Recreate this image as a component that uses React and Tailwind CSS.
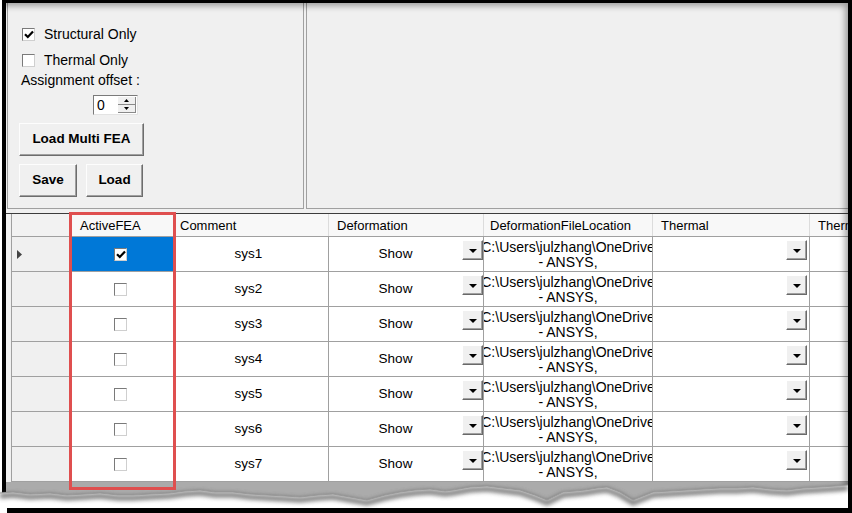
import React from 'react';

const COLS = 'grid grid-cols-[59px_105px_154px_155px_169px_157px_38px]';
const BTN =
  'bg-[#f0f0f0] border border-t-[#fdfdfd] border-l-[#fdfdfd] border-r-[#6d6d6d] border-b-[#6d6d6d] shadow-[inset_-1px_-1px_0_#a0a0a0] font-bold text-[13.5px] flex items-center justify-center';

const ROWS = ['sys1', 'sys2', 'sys3', 'sys4', 'sys5', 'sys6', 'sys7'];

// torn paper edge, y relative to the svg top (480)
const JAG = [
  [0, 13], [13, 12], [30, 14], [50, 13], [67, 15], [85, 14], [100, 13], [118, 15], [133, 15],
  [150, 14], [170, 13], [185, 11], [200, 10], [215, 12], [233, 12], [250, 14], [267, 15],
  [285, 16], [300, 17], [318, 15], [333, 14], [350, 17], [367, 20], [385, 15], [400, 12],
  [415, 10], [430, 9], [445, 11], [453, 10], [470, 7], [487, 6], [503, 8], [520, 10],
  [535, 15], [547, 20], [555, 16], [563, 12], [575, 11], [585, 10], [597, 8], [607, 7],
  [620, 12], [633, 20], [643, 16], [653, 12], [670, 11], [687, 10], [703, 9], [720, 8],
  [737, 8], [753, 7], [770, 9], [787, 10], [803, 8], [820, 7], [835, 6], [848, 5],
];

function CheckBox({ checked, className = '' }) {
  return (
    <div
      className={`w-[13px] h-[13px] shrink-0 bg-white border border-t-[#7a7a7a] border-l-[#7a7a7a] border-r-[#cfcfcf] border-b-[#cfcfcf] flex items-center justify-center ${className}`}
    >
      {checked && (
        <svg width="10" height="9" viewBox="0 0 10 9">
          <path d="M1 4.2l2.8 2.8L9 1.4" fill="none" stroke="black" strokeWidth="2.2" />
        </svg>
      )}
    </div>
  );
}

function DropButton({ className = '' }) {
  return (
    <div
      className={`w-[21px] h-[20px] shrink-0 bg-[#f0f0f0] border border-t-white border-l-white border-r-[#696969] border-b-[#696969] shadow-[inset_-1px_-1px_0_#a0a0a0] flex items-center justify-center ${className}`}
    >
      <svg width="8" height="4" viewBox="0 0 8 4" className="mt-[2px]">
        <path d="M0 0h8L4 4z" fill="black" />
      </svg>
    </div>
  );
}

function Spin() {
  return (
    <div className="w-[18px] my-[1px] mr-[1px] flex flex-col">
      <div className="flex-1 bg-[#f0f0f0] border-r border-b border-[#8a8a8a] flex items-center justify-center">
        <svg width="5" height="3" viewBox="0 0 5 3">
          <path d="M0 3h5L2.5 0z" fill="black" />
        </svg>
      </div>
      <div className="flex-1 bg-[#f0f0f0] border-r border-b border-[#8a8a8a] flex items-center justify-center">
        <svg width="5" height="3" viewBox="0 0 5 3">
          <path d="M0 0h5L2.5 3z" fill="black" />
        </svg>
      </div>
    </div>
  );
}

function TopPanels() {
  return (
    <div className="flex h-[206px]">
      <div className="ml-[1px] w-[297px] border-l border-r border-b border-[#a0a0a0] pl-[11px] pt-[21px] text-[14px] text-black">
        <div className="flex items-center h-5 pl-[3px]">
          <CheckBox checked />
          <span className="ml-[9px]">Structural Only</span>
        </div>
        <div className="flex items-center h-5 pl-[3px] mt-[6px]">
          <CheckBox />
          <span className="ml-[9px]">Thermal Only</span>
        </div>
        <div className="flex items-center h-5 pl-[2px]">Assignment offset :</div>
        <div className="ml-[74px] mt-[5px] w-[45px] h-5 bg-white border border-t-[#7a7a7a] border-l-[#7a7a7a] border-r-[#e3e3e3] border-b-[#e3e3e3] flex">
          <span className="flex-1 pl-[3px] leading-[18px]">0</span>
          <Spin />
        </div>
        <div className={`${BTN} mt-[8px] w-[125px] h-[33px]`}>Load Multi FEA</div>
        <div className="flex mt-[8px]">
          <div className={`${BTN} w-[58px] h-[33px]`}>Save</div>
          <div className={`${BTN} ml-[9px] w-[57px] h-[33px]`}>Load</div>
        </div>
      </div>
      <div className="ml-[2px] flex-1 border-l border-b border-[#a0a0a0]" />
    </div>
  );
}

function Header() {
  const cell = 'flex items-center pt-[2px] border-r border-[#dcdcdc] overflow-hidden whitespace-nowrap';
  return (
    <div className={`${COLS} h-[23px] bg-[#f8f8f8] text-[13px] border-b border-[#a0a0a0]`}>
      <div className={`${cell} border-l border-l-[#a0a0a0] bg-[#f2f2f2]`} />
      <div className={`${cell} pl-[10px]`}>ActiveFEA</div>
      <div className={`${cell} pl-[5px]`}>Comment</div>
      <div className={`${cell} pl-[8px]`}>Deformation</div>
      <div className={`${cell} pl-[6px]`}>DeformationFileLocation</div>
      <div className={`${cell} pl-[8px]`}>Thermal</div>
      <div className={`${cell} pl-[8px] border-r-0`}>Thermal</div>
    </div>
  );
}

function Row({ name, selected }) {
  const cell = 'border-b border-r border-[#a0a0a0] overflow-hidden';
  return (
    <div className={`${COLS} h-[35px] text-[13.5px] bg-white`}>
      <div className={`${cell} border-l border-l-[#a0a0a0] bg-[#f0f0f0] flex items-center pl-[5px]`}>
        {selected && (
          <svg width="5" height="9" viewBox="0 0 5 9">
            <path d="M0 0L5 4.5L0 9z" fill="#444" />
          </svg>
        )}
      </div>
      <div className={`${cell} flex items-center justify-center pr-[3px] ${selected ? 'bg-[#0078d7]' : ''}`}>
        <CheckBox checked={selected} className={selected ? 'border-[#333]' : ''} />
      </div>
      <div className={`${cell} flex items-center justify-center pr-[6px]`}>{name}</div>
      <div className={`${cell} flex`}>
        <div className="flex-1 flex items-center justify-center">Show</div>
        <DropButton className="mt-[3px]" />
      </div>
      <div className={`${cell} pt-[3px] leading-[15px] text-[14px]`}>
        <div className="flex justify-center whitespace-nowrap">C:\Users\julzhang\OneDrive</div>
        <div className="text-center whitespace-nowrap">- ANSYS,</div>
      </div>
      <div className={`${cell} flex justify-end pr-[2px]`}>
        <DropButton className="mt-[3px]" />
      </div>
      <div className="border-b border-[#a0a0a0]" />
    </div>
  );
}

export default function App() {
  return (
    <div className="relative w-[852px] h-[513px] bg-white overflow-hidden font-['Liberation_Sans',Arial,sans-serif] text-black">
      <div className="relative ml-[2px] w-[850px] h-[507px] border-t-[3px] border-l-[4px] border-r-[4px] border-black bg-[#f0f0f0] flex flex-col">
        <TopPanels />
        <div className="mt-[4px] border-t border-[#3c3c3c] pl-[5px]">
          <Header />
          {ROWS.map((r, i) => (
            <Row key={r} name={r} selected={i === 0} />
          ))}
        </div>
        <div className="flex-1 bg-[#ababab]" />
        <div className="absolute inset-0 pointer-events-none shadow-[inset_-6px_6px_6px_-3px_rgba(0,0,0,0.35)]" />
      </div>
      <div className="ml-[7px] h-[6px] bg-black" />

      <svg className="absolute left-0 top-[480px]" width="848" height="28" viewBox="0 0 848 28">
        <defs>
          <filter id="blur" x="-5%" y="-100%" width="110%" height="300%">
            <feGaussianBlur stdDeviation="2" />
          </filter>
        </defs>
        <polygon
          points={[...JAG.map((p) => p.join(',')), '848,28', '0,28'].join(' ')}
          fill="white"
        />
        <polyline
          points={JAG.map(([x, y]) => `${x},${y + 3}`).join(' ')}
          fill="none"
          stroke="#5a5a5a"
          strokeWidth="5"
          opacity="0.8"
          filter="url(#blur)"
        />
        <polyline points={JAG.map((p) => p.join(',')).join(' ')} fill="none" stroke="#999" strokeWidth="1" />
      </svg>

      <div className="absolute left-[69px] top-[212px] w-[107px] h-[278px] border-[3px] border-[#df4f4f]" />
    </div>
  );
}
